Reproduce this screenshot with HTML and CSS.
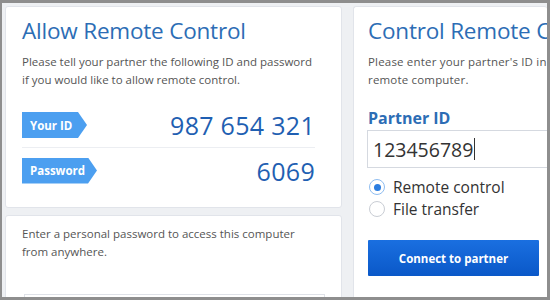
FILE: index.html
```html
<!DOCTYPE html>
<html lang="en">
<head>
  <meta charset="UTF-8" />
  <title>Remote Control</title>
  <link rel="stylesheet" href="styles.css">
</head>
<body>
  <div class="screen">
    <div class="left-col">
      <!-- Allow remote control -->
      <div class="card card-allow">
        <h2>Allow Remote Control</h2>
        <p class="desc">Please tell your partner the following ID and password if you would like to allow remote control.</p>
        <div class="cred-row">
          <span class="tag">Your ID</span>
          <span class="cred-value">987 654 321</span>
        </div>
        <div class="cred-row last">
          <span class="tag tag-wide">Password</span>
          <span class="cred-value">6069</span>
        </div>
      </div>

      <!-- Personal password -->
      <div class="card card-personal">
        <p class="desc">Enter a personal password to access this computer from anywhere.</p>
        <div class="fake-input"></div>
      </div>
    </div>

    <!-- Control remote computer -->
    <div class="card card-control">
      <h2>Control Remote Computer</h2>
      <p class="desc">Please enter your partner's ID in order to control the remote computer.</p>
      <label class="field-label">Partner ID</label>
      <div class="id-input"><span class="id-text">123456789</span><span class="caret"></span></div>
      <div class="radio-row first"><span class="radio checked"></span>Remote control</div>
      <div class="radio-row"><span class="radio"></span>File transfer</div>
      <button class="connect-btn">Connect to partner</button>
    </div>
  </div>
</body>
</html>
```

FILE: styles.css
```css
* {
  margin: 0;
  padding: 0;
  box-sizing: border-box;
}

body {
  width: 550px;
  height: 300px;
  overflow: hidden;
  font-family: 'Open Sans', 'Noto Sans', sans-serif;
}

.screen {
  width: 550px;
  height: 300px;
  border-style: solid;
  border-color: #8e8e8e;
  border-width: 3px 3px 3px 2px;
  background: #eef0f3;
  padding: 3px 0 0 3px;
  display: grid;
  grid-template-columns: 337px 1fr;
  column-gap: 11px;
  overflow: hidden;
}

.left-col {
  display: flex;
  flex-direction: column;
  gap: 7px;
}

.card {
  background: #ffffff;
  border: 1px solid #e1e4ea;
  border-radius: 3px;
}

h2 {
  font-size: 22.5px;
  font-weight: 400;
  color: #2c6db5;
  line-height: 30px;
  white-space: nowrap;
  letter-spacing: -0.2px;
}

.desc {
  font-size: 11.5px;
  line-height: 18px;
  color: #555;
  margin-top: 7px;
}

.card-allow {
  height: 202px;
  padding: 9px 26px 0 16px;
}

.cred-row {
  display: flex;
  align-items: center;
  justify-content: space-between;
  height: 45px;
  border-bottom: 1px solid #eceef2;
  margin-top: 14px;
}

.cred-row.last {
  border-bottom: none;
  margin-top: 0;
}

.tag {
  display: inline-flex;
  align-items: center;
  height: 26px;
  width: 65px;
  padding-left: 8px;
  background: #4c9ff0;
  color: #fff;
  font-size: 11.5px;
  font-weight: 700;
  clip-path: polygon(0 0, calc(100% - 9px) 0, 100% 50%, calc(100% - 9px) 100%, 0 100%);
}

.tag-wide {
  width: 75px;
}

.cred-value {
  font-size: 25px;
  color: #1f5fb2;
  letter-spacing: 0.3px;
}

.card-personal {
  flex: 1;
  padding: 9px 30px 0 16px;
}

.card-personal .desc {
  margin-top: 0;
}

.fake-input {
  margin-top: 33px;
  margin-left: 2px;
  margin-right: -14px;
  height: 30px;
  border: 1px solid #dfe2e8;
}

.card-control {
  padding: 9px 0 0 14px;
  overflow: hidden;
  border-right: none;
}

.card-control .desc {
  width: 310px;
  letter-spacing: 0.18px;
}

.field-label {
  display: block;
  margin-top: 19px;
  font-size: 16px;
  font-weight: 700;
  color: #2c6db5;
  line-height: 20px;
}

.id-input {
  display: flex;
  align-items: center;
  height: 38px;
  margin-top: 2px;
  margin-left: -1px;
  padding-left: 5px;
  border: 1px solid #d5d9e0;
  border-right: none;
  font-size: 19.5px;
  color: #333;
}

.caret {
  width: 1px;
  height: 22px;
  background: #333;
  margin-left: 1px;
}

.radio-row {
  display: flex;
  align-items: center;
  gap: 8px;
  font-size: 15.5px;
  color: #333;
  line-height: 22px;
}

.radio-row.first {
  margin-top: 8px;
}

.radio {
  width: 16px;
  height: 16px;
  border-radius: 50%;
  border: 1px solid #c9cdd4;
  background: #fff;
  position: relative;
  margin-left: 1px;
}

.radio.checked {
  border-color: #8fbdf0;
}

.radio.checked::after {
  content: '';
  position: absolute;
  left: 3.5px;
  top: 3.5px;
  width: 7px;
  height: 7px;
  border-radius: 50%;
  background: #2b7de0;
}

.connect-btn {
  display: block;
  margin-top: 20px;
  width: 171px;
  height: 36px;
  background: linear-gradient(#1a6fe0, #0a58c8);
  border: none;
  border-radius: 1px;
  color: #fff;
  font-family: inherit;
  font-size: 11.5px;
  font-weight: 700;
}
```
